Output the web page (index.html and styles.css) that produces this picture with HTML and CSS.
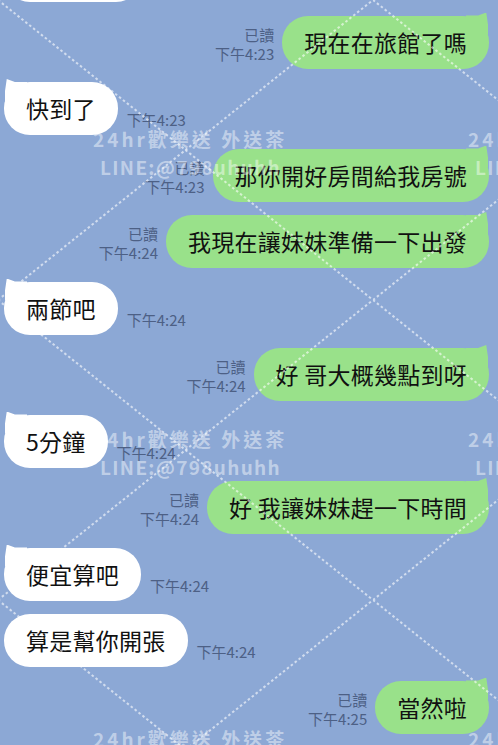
FILE: index.html
```html
<!DOCTYPE html>
<html lang="zh-Hant">
<head>
  <meta charset="UTF-8">
  <title>LINE 聊天</title>
  <link rel="stylesheet" href="styles.css">
</head>
<body>

<!-- Chat messages -->
<div class="chat">
  <!-- previous message, scrolled almost out of view -->
  <div class="row in">
    <div class="bubble stub"></div>
  </div>

  <div class="row out">
    <div class="meta"><span>已讀</span><span>下午4:23</span></div>
    <div class="bubble tail">現在在旅館了嗎</div>
  </div>

  <div class="row in">
    <div class="bubble tail">快到了</div>
    <div class="meta"><span>下午4:23</span></div>
  </div>

  <div class="row out">
    <div class="meta"><span>已讀</span><span>下午4:23</span></div>
    <div class="bubble tail">那你開好房間給我房號</div>
  </div>

  <div class="row out">
    <div class="meta"><span>已讀</span><span>下午4:24</span></div>
    <div class="bubble tail">我現在讓妹妹準備一下出發</div>
  </div>

  <div class="row in">
    <div class="bubble tail">兩節吧</div>
    <div class="meta"><span>下午4:24</span></div>
  </div>

  <div class="row out">
    <div class="meta"><span>已讀</span><span>下午4:24</span></div>
    <div class="bubble tail">好 哥大概幾點到呀</div>
  </div>

  <div class="row in">
    <div class="bubble tail">5分鐘</div>
    <div class="meta"><span>下午4:24</span></div>
  </div>

  <div class="row out">
    <div class="meta"><span>已讀</span><span>下午4:24</span></div>
    <div class="bubble tail">好 我讓妹妹趕一下時間</div>
  </div>

  <div class="row in">
    <div class="bubble tail">便宜算吧</div>
    <div class="meta"><span>下午4:24</span></div>
  </div>

  <div class="row in">
    <div class="bubble">算是幫你開張</div>
    <div class="meta"><span>下午4:24</span></div>
  </div>

  <div class="row out">
    <div class="meta"><span>已讀</span><span>下午4:25</span></div>
    <div class="bubble tail">當然啦</div>
  </div>
</div>

<!-- Watermark layer over the whole screenshot -->
<div class="overlay">
  <svg class="lines" width="498" height="745">
    <defs>
      <pattern id="diamond" x="-2" y="0" width="375" height="300" patternUnits="userSpaceOnUse">
        <line x1="0" y1="0" x2="375" y2="300"/>
        <line x1="0" y1="300" x2="375" y2="0"/>
      </pattern>
    </defs>
    <rect width="498" height="745" fill="url(#diamond)"/>
  </svg>

  <div class="mark r0 c0"><div>24hr歡樂送 外送茶</div><div class="line-id">LINE:@798uhuhh</div></div>
  <div class="mark r0 c1"><div>24hr歡樂送 外送茶</div><div class="line-id">LINE:@798uhuhh</div></div>
  <div class="mark r1 c0"><div>24hr歡樂送 外送茶</div><div class="line-id">LINE:@798uhuhh</div></div>
  <div class="mark r1 c1"><div>24hr歡樂送 外送茶</div><div class="line-id">LINE:@798uhuhh</div></div>
  <div class="mark r2 c0"><div>24hr歡樂送 外送茶</div><div class="line-id">LINE:@798uhuhh</div></div>
  <div class="mark r2 c1"><div>24hr歡樂送 外送茶</div><div class="line-id">LINE:@798uhuhh</div></div>
</div>

</body>
</html>
```

FILE: styles.css
```css
html, body {
  margin: 0;
  height: 745px;
  overflow: hidden;
}
body {
  position: relative;
  background: #8ca8d5;
  font-family: "Noto Sans CJK TC", "Noto Sans", sans-serif;
  color: #111;
}

.chat {
  display: flex;
  flex-direction: column;
  gap: 13.5px;
  margin-top: -51px;
  padding: 0 9px 0 4px;
}
.row {
  display: flex;
  align-items: flex-end;
  gap: 8px;
}
.row.out {
  justify-content: flex-end;
}
.row.in {
  gap: 9px;
}

.bubble {
  position: relative;
  background: #fff;
  border-radius: 26px;
  padding: 11px 22px;
  font-size: 23px;
  line-height: 31px;
  letter-spacing: 0.25px;
  white-space: nowrap;
}
.out .bubble {
  background: #99e18a;
}
.bubble.stub {
  width: 94px;
  height: 31px;
}

/* little horn on the first bubble of a group */
.bubble.tail::before {
  content: "";
  position: absolute;
  top: -3px;
  width: 22px;
  height: 22px;
  background: inherit;
}
.out .bubble.tail::before {
  right: 1px;
  clip-path: polygon(0 14%, 55% 14%, 92% 0, 100% 55%, 100% 100%, 0 100%);
}
.in .bubble.tail::before {
  left: 1px;
  clip-path: polygon(100% 14%, 45% 14%, 8% 0, 0 55%, 0 100%, 100% 100%);
}

.meta {
  display: flex;
  flex-direction: column;
  align-items: flex-end;
  padding-bottom: 6px;
  font-size: 15px;
  line-height: 19px;
  color: #4d6085;
  white-space: nowrap;
}
.in .meta {
  align-items: flex-start;
}

/* watermark */
.overlay {
  position: absolute;
  inset: 0;
  pointer-events: none;
}
.lines {
  position: absolute;
  left: 0;
  top: 0;
}
.lines line {
  stroke: rgba(255, 255, 255, 0.6);
  stroke-width: 2;
  stroke-dasharray: 2.5 2.5;
}
.mark {
  position: absolute;
  font-size: 19px;
  font-weight: 700;
  line-height: 28px;
  letter-spacing: 3px;
  color: rgba(255, 255, 255, 0.45);
  white-space: nowrap;
}
.mark .line-id {
  padding-left: 7px;
  letter-spacing: 1.3px;
}
.mark.c0 { left: 93px; }
.mark.c1 { left: 468px; }
.mark.r0 { top: 125px; }
.mark.r1 { top: 425px; }
.mark.r2 { top: 725px; }
```
